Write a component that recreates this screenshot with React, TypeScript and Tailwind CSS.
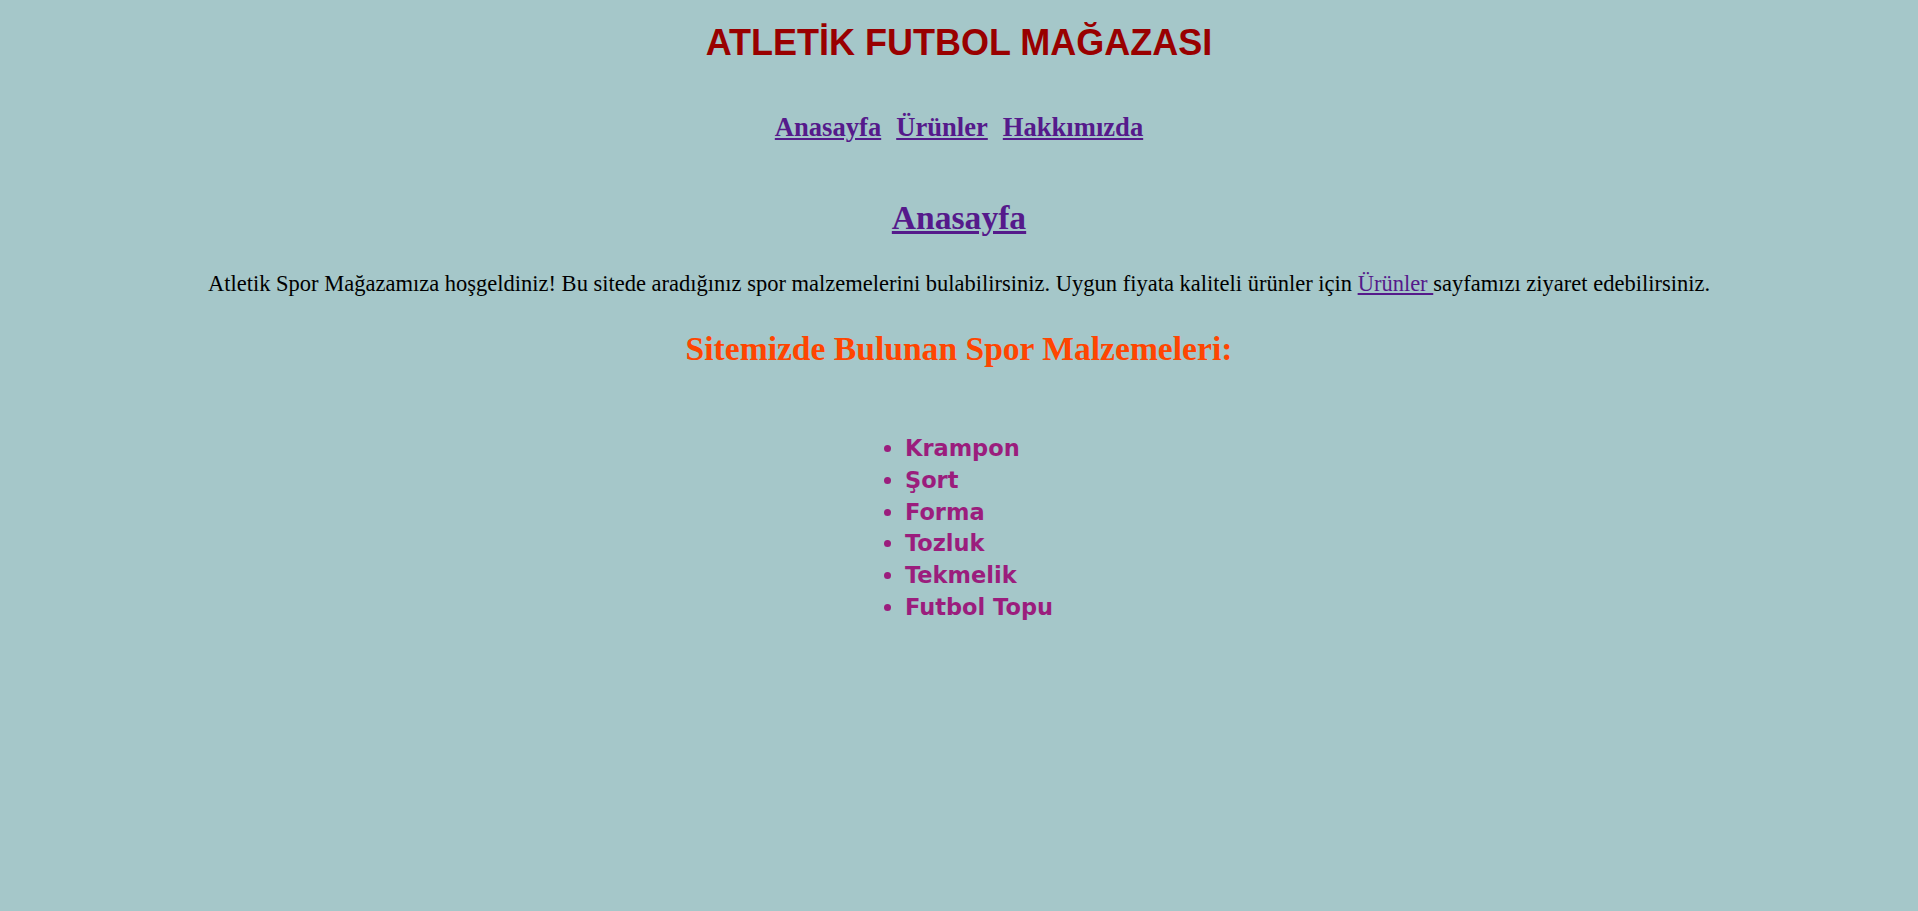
import React from "react";

const items = ["Krampon", "Şort", "Forma", "Tozluk", "Tekmelik", "Futbol Topu"];

const App = () => {
  return (
    <div className="min-h-[911px] w-full bg-[#a5c7c9] pt-[23px] text-center font-['Liberation_Serif',serif] text-black">
      <h1 className="font-['Liberation_Sans',Arial,sans-serif] text-[36px] font-bold leading-[40px] text-[#990000]">
        ATLETİK FUTBOL MAĞAZASI
      </h1>

      <nav className="mt-[49px] flex justify-center gap-[15px] text-[26.6px] font-bold leading-[30px] text-[#551a8b]">
        <a href="#" className="underline">Anasayfa</a>
        <a href="#" className="underline">Ürünler</a>
        <a href="#" className="underline">Hakkımızda</a>
      </nav>

      <h2 className="mt-[57px] text-[33.6px] font-bold leading-[38px]">
        <a href="#" className="text-[#551a8b] underline">Anasayfa</a>
      </h2>

      <p className="mt-[34px] text-[22.5px] leading-[26px]">
        Atletik Spor Mağazamıza hoşgeldiniz! Bu sitede aradığınız spor malzemelerini bulabilirsiniz. Uygun fiyata kaliteli ürünler için{" "}
        <a href="#" className="text-[#551a8b] underline">Ürünler </a>
        sayfamızı ziyaret edebilirsiniz.
      </p>

      <h2 className="mt-[33px] text-[33.6px] font-bold leading-[38px] text-[#ff4500]">
        Sitemizde Bulunan Spor Malzemeleri:
      </h2>

      <div className="mt-[65px] flex justify-center">
        <ul className="list-disc pl-10 text-left font-['DejaVu_Sans',sans-serif] text-[22.5px] font-bold leading-[31.8px] text-[#9b1d7d]">
          {items.map((item) => (
            <li key={item}>{item}</li>
          ))}
        </ul>
      </div>
    </div>
  );
};

export default App;
